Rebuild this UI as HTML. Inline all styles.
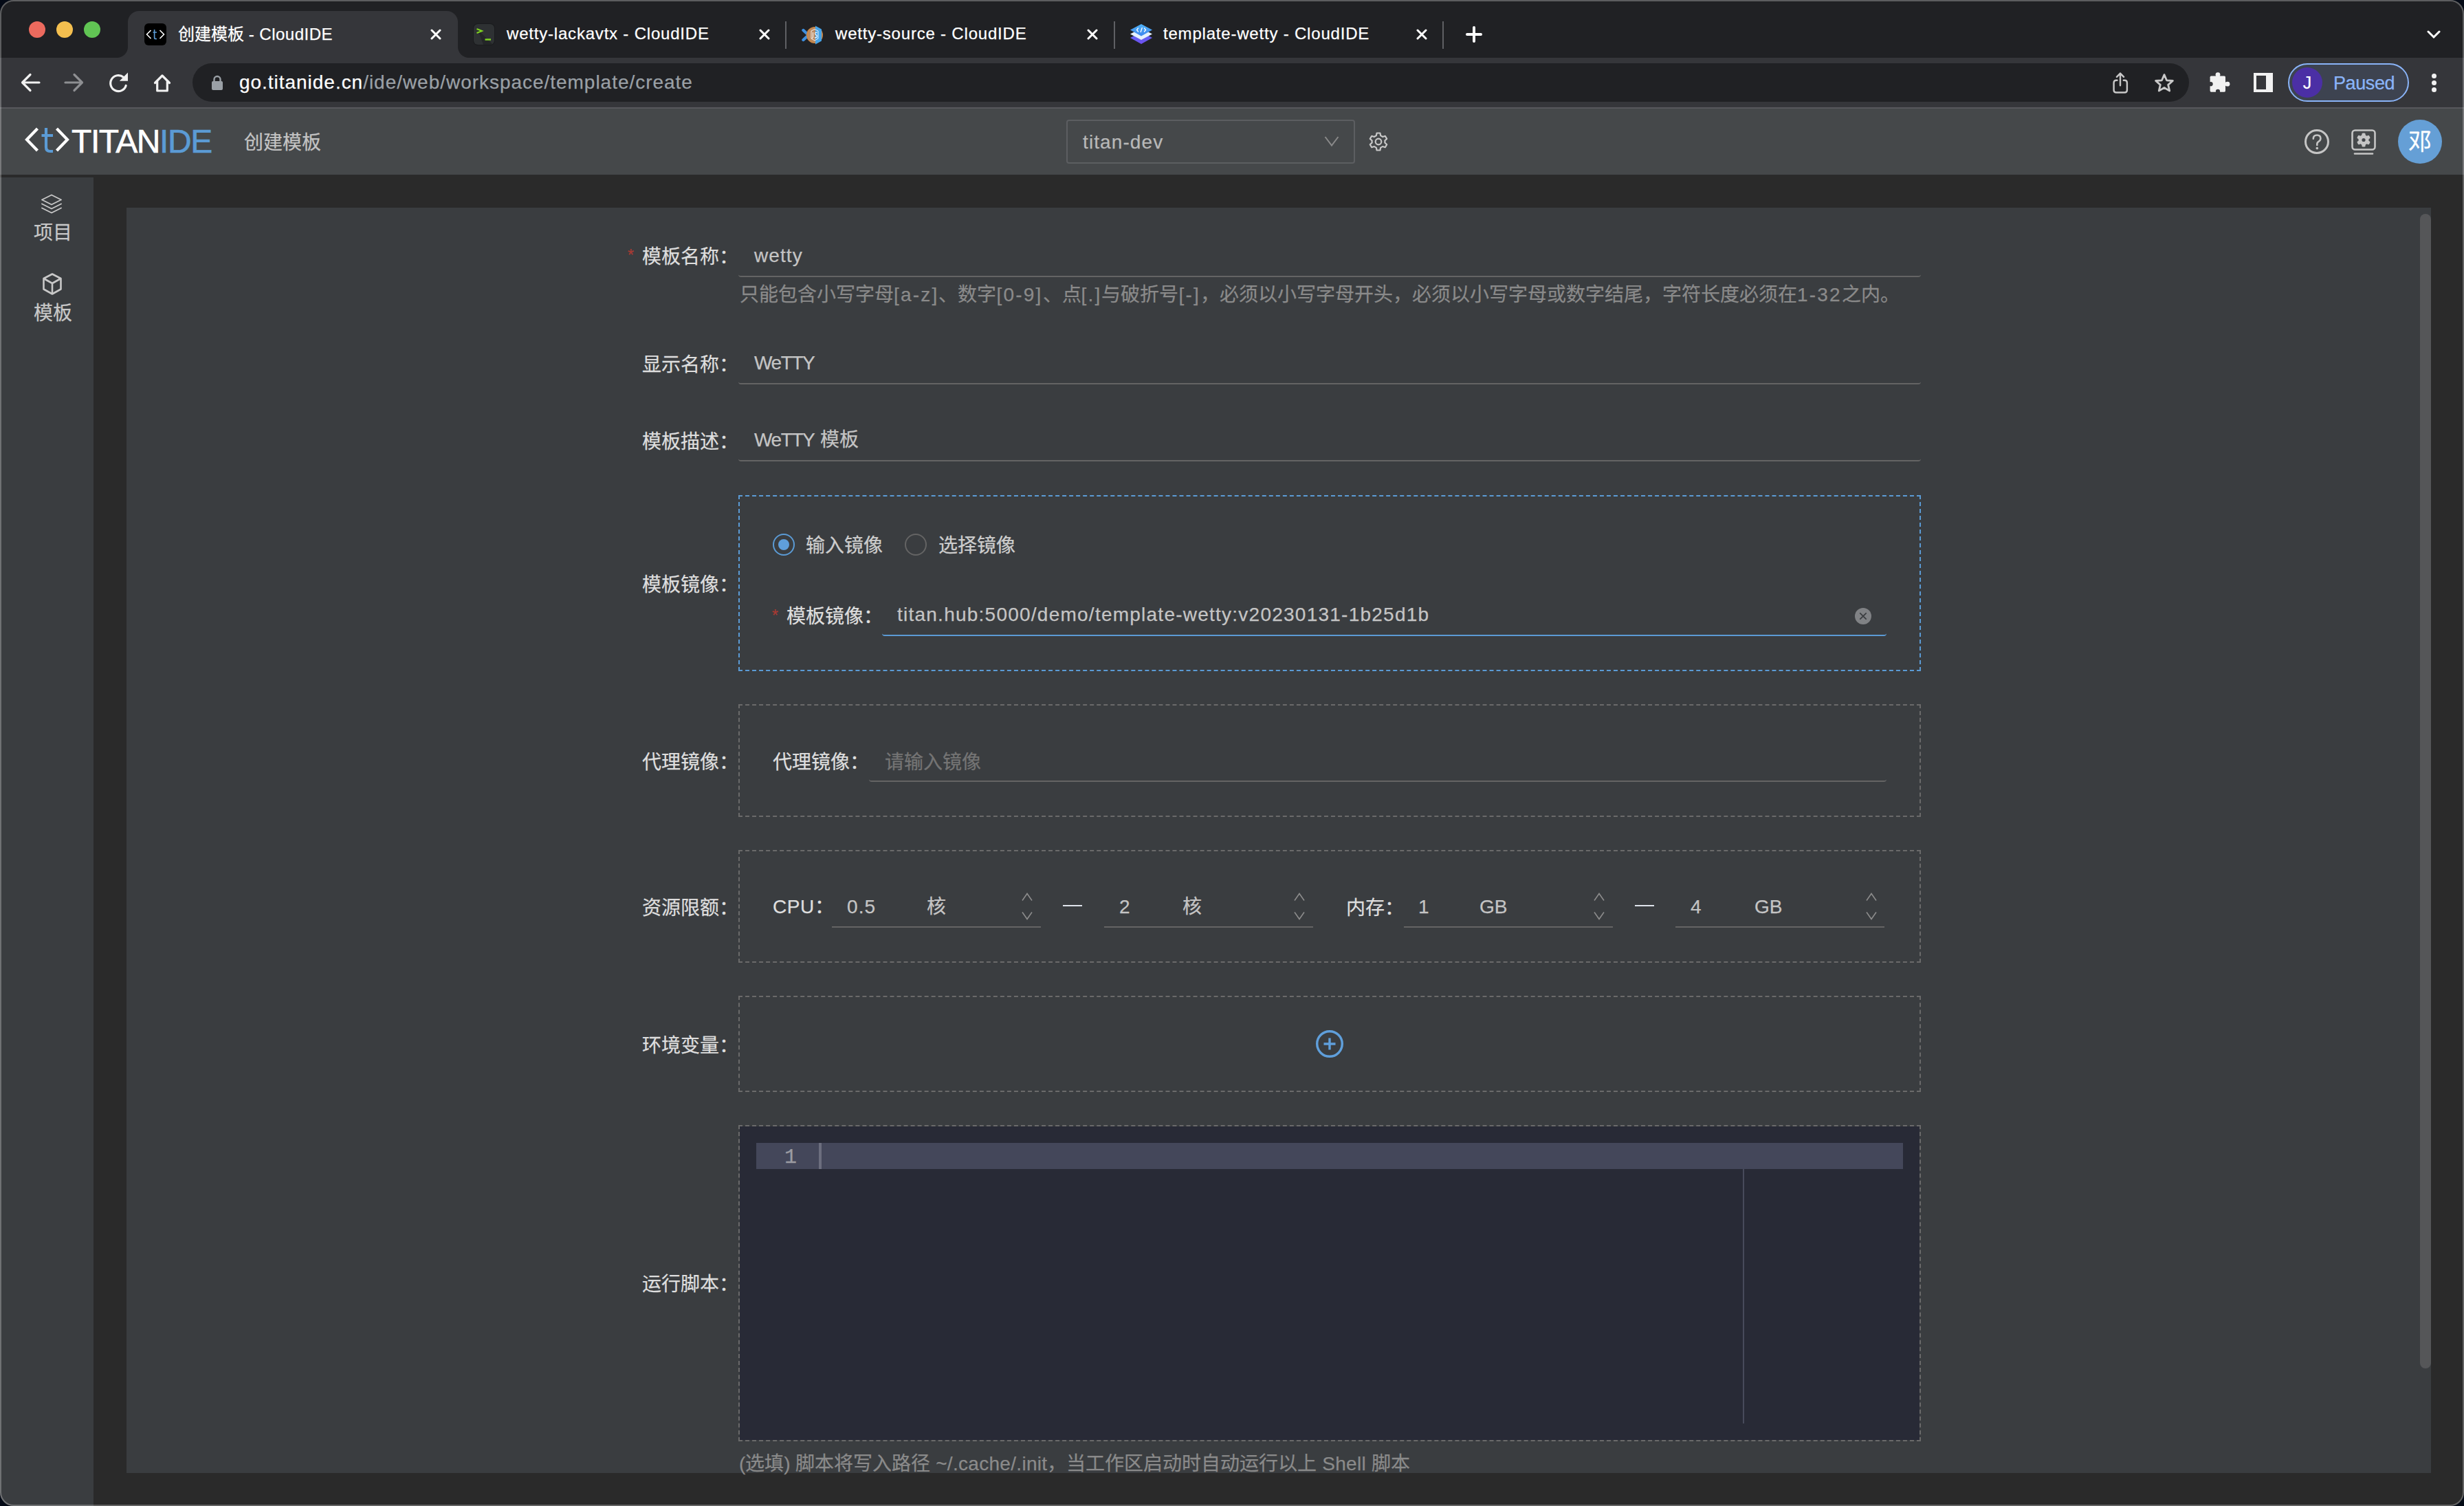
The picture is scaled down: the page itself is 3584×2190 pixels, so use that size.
<!DOCTYPE html>
<html lang="zh-CN"><head><meta charset="utf-8">
<style>
*{box-sizing:border-box;margin:0;padding:0}
html,body{width:3584px;height:2190px;overflow:hidden;background:#040a16;font-family:"Liberation Sans",sans-serif}
.win{position:absolute;left:0;top:0;width:3584px;height:2190px;border-radius:20px;overflow:hidden;background:#2a2a2a}
.winb{position:absolute;left:0;top:0;width:3584px;height:2190px;border-radius:20px;border:2px solid rgba(255,255,255,0.27);pointer-events:none;z-index:50}
.abs{position:absolute}
.t{position:absolute;white-space:pre;line-height:1;-webkit-text-stroke:0.25px currentColor}
/* chrome */
#tabstrip{left:0;top:0;width:3584px;height:84px;background:#202124}
#toolbar{left:0;top:84px;width:3584px;height:72px;background:#35363a}
#tbsep{left:0;top:156px;width:3584px;height:2px;background:#57585c}
.tab{position:absolute;top:16px;height:68px;width:480px}
#acttab{left:186px;top:16px;width:480px;height:68px;background:#35363a;border-radius:16px 16px 0 0}
.tabcorner{position:absolute;top:68px;width:16px;height:16px;background:#35363a}
.tabcorner::after{content:"";position:absolute;left:0;top:0;width:16px;height:16px;background:#202124}
#tcl::after{border-bottom-right-radius:16px}
#tcr::after{border-bottom-left-radius:16px}
.ttl{font-size:24px;color:#fff;letter-spacing:0.8px}
.tsep{position:absolute;top:31px;width:2px;height:40px;background:#5f6064}
#omni{left:280px;top:92px;width:2904px;height:56px;border-radius:28px;background:#202124}
.url{font-size:28px;letter-spacing:0.97px}
/* app */
#hdr{left:0;top:158px;width:3584px;height:96px;background:#45484a}
#side{left:0;top:258px;width:136px;height:1932px;background:#3a3d40}
#card{left:184px;top:302px;width:3352px;height:1840px;background:#3a3d40}
#sbar{left:3520px;top:311px;width:16px;height:1679px;border-radius:8px;background:#555658}
.lbl{font-size:28px;color:#dedede}
.val{font-size:28px;color:#c4c4c4;letter-spacing:1.1px}
.req{font-size:23px;color:#a83a33}
.uline{position:absolute;height:4px;border-bottom:2px solid #646464;border-radius:0 0 4px 4px}
.dbox{position:absolute;border:2px dashed #6a6a6a}
.help{font-size:28px;color:#8a8a8a}
.lt{letter-spacing:2.2px}
.lt2{letter-spacing:0.3px}
</style></head><body>
<div class="win">
  <!-- ===== TAB STRIP ===== -->
  <div id="tabstrip" class="abs"></div>
  <!-- traffic lights -->
  <div class="abs" style="left:42px;top:31px;width:24px;height:24px;border-radius:50%;background:#ec6a5e"></div>
  <div class="abs" style="left:82px;top:31px;width:24px;height:24px;border-radius:50%;background:#f4bf4f"></div>
  <div class="abs" style="left:122px;top:31px;width:24px;height:24px;border-radius:50%;background:#61c554"></div>
  <div id="acttab" class="abs"></div>
  <div id="tcl" class="tabcorner" style="left:170px"></div>
  <div id="tcr" class="tabcorner" style="left:666px"></div>
  
  <!-- tab 1 favicon -->
  <div class="abs" style="left:210px;top:34px;width:32px;height:32px;border-radius:6px;background:#000">
    <svg width="32" height="32" viewBox="0 0 32 32" style="position:absolute;left:0;top:0">
      <path d="M9.5 10 L3.5 16 L9.5 22" fill="none" stroke="#fff" stroke-width="1.6"/>
      <path d="M22.5 10 L28.5 16 L22.5 22" fill="none" stroke="#fff" stroke-width="1.6"/>
      <path d="M14.6 9 V20.5 Q14.6 22.5 16.6 22.5 H18 M12.5 13 H18" fill="none" stroke="#5b9bd5" stroke-width="1.7"/>
    </svg>
  </div>
  <div class="t ttl" style="left:259px;top:38px;letter-spacing:0">创建模板 <span style="letter-spacing:0.5px">- CloudIDE</span></div>
  <svg class="abs" style="left:626px;top:42px" width="16" height="16" viewBox="0 0 16 16"><path d="M2 2L14 14M14 2L2 14" stroke="#fff" stroke-width="3" stroke-linecap="round"/></svg>
  <!-- tab 2 -->
  <div class="abs" style="left:689px;top:35px;width:30px;height:30px;border-radius:6px;background:#2e3133;overflow:hidden;box-shadow:0 0 0 1px #1a1b1d">
    <svg width="30" height="30" viewBox="0 0 30 30" style="position:absolute;left:0;top:0">
      <path d="M6 8 L30 32 L30 30 L14 30 Z" fill="#232527"/>
      <path d="M4.5 7 L12 10 L4.5 13" fill="none" stroke="#7ed321" stroke-width="2"/>
      <path d="M16.5 22.5 H25" stroke="#7ed321" stroke-width="2.4"/>
    </svg>
  </div>
  <div class="t ttl" style="left:737px;top:37px">wetty-lackavtx - CloudIDE</div>
  <svg class="abs" style="left:1104px;top:42px" width="16" height="16" viewBox="0 0 16 16"><path d="M2 2L14 14M14 2L2 14" stroke="#fff" stroke-width="3" stroke-linecap="round"/></svg>
  <div class="tsep" style="left:1142px"></div>
  <!-- tab 3 -->
  <svg class="abs" style="left:1166px;top:36px" width="32" height="30" viewBox="0 0 32 30">
    <path d="M2.5 8 L10 15 L2.5 22" fill="none" stroke="#3d8fe0" stroke-width="4.4" stroke-linejoin="round" stroke-linecap="round"/>
    <circle cx="19" cy="15" r="12" fill="#c8874a"/>
    <circle cx="19" cy="15" r="10" fill="#b98b63"/>
    <path d="M20 1.5 L29 6.5 L29 23.5 L20 28.5 Z" fill="#47a4e8"/>
    <path d="M14 9 L19 6.5 L24 9 V20 L19 23 L14 20 Z" fill="none" stroke="#fff" stroke-width="1" opacity="0.85"/>
    <path d="M16.5 11 V18 Q16.5 19.5 15 19.5 M22.5 11.5 Q20 10.5 19.5 12.5 Q19.5 14.5 21.5 15 Q23 16 22 18 Q20.5 19.5 19 18.5" fill="none" stroke="#fff" stroke-width="1.1"/>
  </svg>
  <div class="t ttl" style="left:1215px;top:37px">wetty-source - CloudIDE</div>
  <svg class="abs" style="left:1581px;top:42px" width="16" height="16" viewBox="0 0 16 16"><path d="M2 2L14 14M14 2L2 14" stroke="#fff" stroke-width="3" stroke-linecap="round"/></svg>
  <div class="tsep" style="left:1620px"></div>
  <!-- tab 4 -->
  <svg class="abs" style="left:1643px;top:34px" width="34" height="31" viewBox="0 0 34 31">
    <defs>
      <linearGradient id="g4a" x1="0" y1="0" x2="0" y2="1"><stop offset="0" stop-color="#5b6cf5"/><stop offset="1" stop-color="#6f4ff0"/></linearGradient>
      <linearGradient id="g4b" x1="0" y1="0" x2="0" y2="1"><stop offset="0" stop-color="#4fb3f7"/><stop offset="1" stop-color="#3d86ee"/></linearGradient>
    </defs>
    <path d="M1 21 L17 12.5 L33 21 L17 30 Z" fill="url(#g4a)"/>
    <path d="M1 15.5 L17 7 L33 15.5 L17 24 Z" fill="#e4f1fd"/>
    <path d="M1 9.5 L17 1 L33 9.5 L17 18.5 Z" fill="url(#g4b)"/>
    <path d="M12.5 7 L10.5 9.5 L12.5 12 M21.5 7 L23.5 9.5 L21.5 12 M18.2 6.5 L16.2 12.5" fill="none" stroke="#fff" stroke-width="1.3" stroke-linecap="round"/>
  </svg>
  <div class="t ttl" style="left:1692px;top:37px">template-wetty - CloudIDE</div>
  <svg class="abs" style="left:2060px;top:42px" width="16" height="16" viewBox="0 0 16 16"><path d="M2 2L14 14M14 2L2 14" stroke="#fff" stroke-width="3" stroke-linecap="round"/></svg>
  <div class="tsep" style="left:2098px"></div>
  <svg class="abs" style="left:2132px;top:38px" width="24" height="24" viewBox="0 0 24 24"><path d="M12 2V22M2 12H22" stroke="#fff" stroke-width="4" stroke-linecap="round"/></svg>
  <svg class="abs" style="left:3530px;top:43px" width="20" height="14" viewBox="0 0 20 14"><path d="M2 3 L10 11 L18 3" fill="none" stroke="#fff" stroke-width="3" stroke-linecap="round"/></svg>

  <!-- ===== TOOLBAR ===== -->
  <div id="toolbar" class="abs"></div>
  <div id="tbsep" class="abs"></div>
  <div id="omni" class="abs"></div>
  
  <!-- back / fwd / reload / home -->
  <svg class="abs" style="left:28px;top:104px" width="32" height="32" viewBox="0 0 32 32"><path d="M29 16H5M16 4.5L4.5 16L16 27.5" fill="none" stroke="#f1f1f1" stroke-width="3.2" stroke-linecap="round" stroke-linejoin="round"/></svg>
  <svg class="abs" style="left:92px;top:104px" width="32" height="32" viewBox="0 0 32 32"><path d="M3 16H27M16 4.5L27.5 16L16 27.5" fill="none" stroke="#8e8f92" stroke-width="3.2" stroke-linecap="round" stroke-linejoin="round"/></svg>
  <svg class="abs" style="left:156px;top:104px" width="32" height="32" viewBox="0 0 32 32">
    <path d="M27.2 20.5 A11.5 11.5 0 1 1 23.5 8.2" fill="none" stroke="#f1f1f1" stroke-width="3.2" stroke-linecap="round"/>
    <path d="M17.8 13.8 L30 13.8 L30 1.5 Z" fill="#f1f1f1"/>
  </svg>
  <svg class="abs" style="left:220px;top:104px" width="32" height="32" viewBox="0 0 32 32"><path d="M5.5 16.5 L16 6 L26.5 16.5 M8.7 14 V28 H23.3 V14" fill="none" stroke="#f1f1f1" stroke-width="3.2" stroke-linejoin="round" stroke-linecap="round"/></svg>
  <!-- lock -->
  <svg class="abs" style="left:306px;top:108px" width="20" height="24" viewBox="0 0 20 24"><path d="M5.5 10 V7.5 A4.5 4.5 0 0 1 14.5 7.5 V10" fill="none" stroke="#9aa0a6" stroke-width="2.4"/><rect x="2" y="10" width="16" height="13" rx="2" fill="#9aa0a6"/></svg>
  <div class="t url" style="left:348px;top:106px;color:#fff">go.titanide.cn<span style="color:#9aa0a6">/ide/web/workspace/template/create</span></div>
  <!-- share / star -->
  <svg class="abs" style="left:3070px;top:104px" width="28" height="34" viewBox="0 0 28 34"><path d="M14 3 V20.3 M8.9 7.8 L14 2.6 L19.1 7.8 M9.5 12.8 H8.2 Q4.6 12.8 4.6 16.4 V26.9 Q4.6 30.5 8.2 30.5 H20.3 Q23.9 30.5 23.9 26.9 V16.4 Q23.9 12.8 20.3 12.8 H18.8" fill="none" stroke="#c8c8c8" stroke-width="2.4" stroke-linecap="round" stroke-linejoin="round"/></svg>
  <svg class="abs" style="left:3131px;top:104px" width="34" height="32" viewBox="0 0 34 32"><g transform="translate(17 16.3) scale(0.9) translate(-17 -16)"><path d="M17 3 L20.9 12.1 L30.8 12.9 L23.3 19.4 L25.6 29.1 L17 24 L8.4 29.1 L10.7 19.4 L3.2 12.9 L13.1 12.1 Z" fill="none" stroke="#c8c8c8" stroke-width="3.1" stroke-linejoin="round"/></g></svg>
  <!-- puzzle -->
  <svg class="abs" style="left:3212px;top:103px" width="34" height="32" viewBox="0 0 34 32">
    <rect x="2.6" y="7.6" width="22.4" height="23.1" rx="1.6" fill="#f1f1f1"/>
    <circle cx="14" cy="5.6" r="3.4" fill="#f1f1f1"/><rect x="11.6" y="5.6" width="4.8" height="3" fill="#f1f1f1"/>
    <circle cx="28" cy="19.2" r="3.4" fill="#f1f1f1"/><rect x="24" y="16.8" width="4" height="4.8" fill="#f1f1f1"/>
    <circle cx="3.6" cy="19.2" r="3.1" fill="#35363a"/>
    <circle cx="14" cy="29.8" r="3.1" fill="#35363a"/>
  </svg>
  <!-- side panel -->
  <div class="abs" style="left:3278px;top:106px;width:28px;height:28px;background:#f1f1f1"></div>
  <div class="abs" style="left:3282px;top:110px;width:14px;height:20px;background:#35363a"></div>
  <!-- profile pill -->
  <div class="abs" style="left:3328px;top:92px;width:176px;height:56px;border-radius:28px;border:2px solid #8ab4f8;background:#3d4350"></div>
  <div class="abs" style="left:3334px;top:98px;width:44px;height:44px;border-radius:50%;background:#4b2fa5"></div>
  <div class="t" style="left:3346px;top:108px;font-size:25px;color:#fff;width:20px;text-align:center">J</div>
  <div class="t" style="left:3394px;top:108px;font-size:27px;color:#8ab4f8;letter-spacing:-0.4px">Paused</div>
  <!-- kebab -->
  <div class="abs" style="left:3537px;top:107px;width:7px;height:7px;border-radius:50%;background:#f1f1f1"></div>
  <div class="abs" style="left:3537px;top:117px;width:7px;height:7px;border-radius:50%;background:#f1f1f1"></div>
  <div class="abs" style="left:3537px;top:127px;width:7px;height:7px;border-radius:50%;background:#f1f1f1"></div>

  <!-- ===== APP HEADER ===== -->
  <div id="hdr" class="abs"></div>
  
  <!-- logo -->
  <svg class="abs" style="left:34px;top:184px" width="72" height="42" viewBox="0 0 72 42">
    <path d="M20.5 3 L5 19 L20.5 35" fill="none" stroke="#fff" stroke-width="4.2"/>
    <path d="M48.5 3 L64 19 L48.5 35" fill="none" stroke="#fff" stroke-width="4.2"/>
    <path d="M33 2 V30 Q33 36 39 36 H43 M26.5 13 H43" fill="none" stroke="#5b9bd5" stroke-width="4.2"/>
  </svg>
  <div class="t" style="left:104px;top:182px;font-size:48px;color:#fff;letter-spacing:-1.4px;-webkit-text-stroke:0.6px #fff">TITAN<span style="color:#5b9bd5;-webkit-text-stroke:0.6px #5b9bd5">IDE</span></div>
  <div class="t" style="left:355px;top:194px;font-size:28px;color:#c3c3c3">创建模板</div>
  <!-- select -->
  <div class="abs" style="left:1551px;top:174px;width:420px;height:64px;border:2px solid #5c5e61;border-radius:4px"></div>
  <div class="t" style="left:1575px;top:193px;font-size:28px;color:#b8b8b8;letter-spacing:1.1px">titan-dev</div>
  <svg class="abs" style="left:1926px;top:197px" width="22" height="17" viewBox="0 0 22 17"><path d="M1.5 2 L11 14.5 L20.5 2" fill="none" stroke="#8a8a8a" stroke-width="2"/></svg>
  <!-- gear -->
  <svg class="abs" style="left:1990px;top:191px" width="30" height="30" viewBox="0 0 30 30">
    <path d="M12.6 2.5 H17.4 L18.2 6.3 Q19.8 6.9 21.1 8 L24.8 6.8 L27.2 10.9 L24.3 13.5 Q24.6 15 24.3 16.5 L27.2 19.1 L24.8 23.2 L21.1 22 Q19.8 23.1 18.2 23.7 L17.4 27.5 H12.6 L11.8 23.7 Q10.2 23.1 8.9 22 L5.2 23.2 L2.8 19.1 L5.7 16.5 Q5.4 15 5.7 13.5 L2.8 10.9 L5.2 6.8 L8.9 8 Q10.2 6.9 11.8 6.3 Z" fill="none" stroke="#c8c8c8" stroke-width="2.2" stroke-linejoin="round"/>
    <circle cx="15" cy="15" r="4.3" fill="none" stroke="#c8c8c8" stroke-width="2.2"/>
  </svg>
  <!-- help -->
  <svg class="abs" style="left:3350px;top:186px" width="40" height="40" viewBox="0 0 40 40">
    <circle cx="20" cy="20" r="16.5" fill="none" stroke="#c5c5c5" stroke-width="3"/>
    <path d="M14.8 15.8 Q14.8 10.5 20.2 10.5 Q25.4 10.5 25.4 15.3 Q25.4 18.3 22.5 19.8 Q20.3 21 20.3 23.5 V25" fill="none" stroke="#c5c5c5" stroke-width="2.6" stroke-linecap="round"/>
    <circle cx="20.3" cy="29.6" r="1.8" fill="#c5c5c5"/>
  </svg>
  <!-- monitor gear -->
  <svg class="abs" style="left:3418px;top:186px" width="40" height="40" viewBox="0 0 40 40">
    <rect x="3.5" y="3.5" width="33" height="28" rx="4" fill="none" stroke="#c5c5c5" stroke-width="2.6"/>
    <path d="M7 37.5 H33" stroke="#c5c5c5" stroke-width="2.6" stroke-linecap="round"/>
    <g transform="translate(20 17.5)" fill="#c5c5c5">
      <circle r="7.5"/>
      <rect x="-2.6" y="-10" width="5.2" height="20" rx="1.5"/>
      <rect x="-2.6" y="-10" width="5.2" height="20" rx="1.5" transform="rotate(60)"/>
      <rect x="-2.6" y="-10" width="5.2" height="20" rx="1.5" transform="rotate(120)"/>
    </g>
    <circle cx="20" cy="17.5" r="2.6" fill="#43464a"/>
  </svg>
  <!-- avatar -->
  <div class="abs" style="left:3488px;top:174px;width:64px;height:64px;border-radius:50%;background:#659fd6"></div>
  <div class="t" style="left:3488px;top:189px;width:64px;text-align:center;font-size:34px;color:#fff">邓</div>

  <div id="side" class="abs"></div>
  
  <svg class="abs" style="left:58px;top:281px" width="34" height="32" viewBox="0 0 34 32">
    <path d="M17 2.5 L31 9.5 L17 16.5 L3 9.5 Z" fill="none" stroke="#c8c8c8" stroke-width="1.9" stroke-linejoin="round"/>
    <path d="M3 15.5 L17 22.5 L31 15.5" fill="none" stroke="#c8c8c8" stroke-width="1.9" stroke-linejoin="round" stroke-linecap="round"/>
    <path d="M3 21.5 L17 28.5 L31 21.5" fill="none" stroke="#c8c8c8" stroke-width="1.9" stroke-linejoin="round" stroke-linecap="round"/>
  </svg>
  <div class="t" style="left:49px;top:325px;font-size:28px;color:#c8c8c8">项目</div>
  <svg class="abs" style="left:60px;top:396px" width="32" height="34" viewBox="0 0 32 34">
    <path d="M16 2.5 L28.5 9 V24.5 L16 31.5 L3.5 24.5 V9 Z" fill="none" stroke="#c8c8c8" stroke-width="2.6" stroke-linejoin="round"/>
    <path d="M3.5 9 L16 16 L28.5 9 M16 16 V31.5" fill="none" stroke="#c8c8c8" stroke-width="2.6" stroke-linejoin="round"/>
  </svg>
  <div class="t" style="left:49px;top:442px;font-size:28px;color:#c8c8c8">模板</div>

  <div id="card" class="abs"></div>
  <div id="sbar" class="abs"></div>
  
<!--FORM-->
  <div class="t req" style="left:913px;top:360px">*</div>
  <div class="t lbl" style="left:934px;top:360px;">模板名称：</div>
  <div class="t val" style="left:1097px;top:358px;">wetty</div>
  <div class="uline" style="left:1074px;top:399px;width:1720px;"></div>
  <div class="t help" style="left:1076px;top:415px">只能包含小写字母<span class="lt">[a-z]</span>、数字<span class="lt">[0-9]</span>、点<span class="lt">[.]</span>与破折号<span class="lt">[-]</span>，必须以小写字母开头，必须以小写字母或数字结尾，字符长度必须在<span class="lt">1-32</span>之内。</div>
  <div class="t lbl" style="left:934px;top:517px;">显示名称：</div>
  <div class="t val" style="left:1097px;top:514px;letter-spacing:-1.4px">WeTTY</div>
  <div class="uline" style="left:1074px;top:555px;width:1720px;"></div>
  <div class="t lbl" style="left:934px;top:629px;">模板描述：</div>
  <div class="t val" style="left:1097px;top:626px;"><span style="letter-spacing:-1.4px">WeTTY</span> <span style="letter-spacing:0">模板</span></div>
  <div class="uline" style="left:1074px;top:667px;width:1720px;"></div>
  <div class="dbox" style="left:1074px;top:720px;width:1720px;height:256px;border-color:#5b9bd5"></div>
  <div class="t lbl" style="left:934px;top:837px;">模板镜像：</div>
  <div class="abs" style="left:1124px;top:776px;width:32px;height:32px;border-radius:50%;border:2px solid #5b9bd5"></div>
  <div class="abs" style="left:1132px;top:784px;width:16px;height:16px;border-radius:50%;background:#5f9fdb"></div>
  <div class="t lbl" style="left:1172px;top:780px;color:#cdcdcd">输入镜像</div>
  <div class="abs" style="left:1316px;top:776px;width:32px;height:32px;border-radius:50%;border:2px solid #646464"></div>
  <div class="t lbl" style="left:1365px;top:780px;color:#cdcdcd">选择镜像</div>
  <div class="t req" style="left:1123px;top:884px">*</div>
  <div class="t lbl" style="left:1144px;top:883px;">模板镜像：</div>
  <div class="t val" style="left:1305px;top:880px;letter-spacing:1.24px">titan.hub:5000/demo/template-wetty:v20230131-1b25d1b</div>
  <div class="uline" style="left:1283px;top:921px;width:1461px;border-color:#5b9bd5;"></div>
  <svg class="abs" style="left:2698px;top:884px" width="24" height="24" viewBox="0 0 24 24"><circle cx="12" cy="12" r="12" fill="#808285"/><path d="M7.3 7.3 L16.7 16.7 M16.7 7.3 L7.3 16.7" stroke="#3a3d40" stroke-width="1.7"/></svg>
  <div class="dbox" style="left:1074px;top:1024px;width:1720px;height:164px"></div>
  <div class="t lbl" style="left:934px;top:1095px;">代理镜像：</div>
  <div class="t lbl" style="left:1124px;top:1095px;">代理镜像：</div>
  <div class="t lbl" style="left:1287px;top:1095px;color:#747474">请输入镜像</div>
  <div class="uline" style="left:1264px;top:1133px;width:1480px;"></div>
  <div class="dbox" style="left:1074px;top:1236px;width:1720px;height:164px"></div>
  <div class="t lbl" style="left:934px;top:1307px;">资源限额：</div>
  <div class="t val" style="left:1124px;top:1305px;color:#dedede;letter-spacing:0.6px">CPU<span style="letter-spacing:0">：</span></div>
  <div class="t val" style="left:1232px;top:1305px;">0.5</div>
  <div class="t lbl" style="left:1348px;top:1305px;color:#c4c4c4">核</div>
  <svg class="abs" style="left:1485px;top:1297px" width="18" height="42" viewBox="0 0 18 42"><path d="M2 12.5 L9 2.5 L16 12.5 M2 29.5 L9 39.5 L16 29.5" fill="none" stroke="#8c8c8c" stroke-width="1.6"/></svg>
  <div class="uline" style="left:1210px;top:1345px;width:304px;border-radius:0;"></div>
  <div class="abs" style="left:1546px;top:1316px;width:28px;height:2px;background:#dfe4ec"></div>
  <div class="t val" style="left:1628px;top:1305px;">2</div>
  <div class="t lbl" style="left:1720px;top:1305px;color:#c4c4c4">核</div>
  <svg class="abs" style="left:1881px;top:1297px" width="18" height="42" viewBox="0 0 18 42"><path d="M2 12.5 L9 2.5 L16 12.5 M2 29.5 L9 39.5 L16 29.5" fill="none" stroke="#8c8c8c" stroke-width="1.6"/></svg>
  <div class="uline" style="left:1606px;top:1345px;width:304px;border-radius:0;"></div>
  <div class="t lbl" style="left:1958px;top:1307px;">内存：</div>
  <div class="t val" style="left:2063px;top:1305px;">1</div>
  <div class="t val" style="left:2152px;top:1305px;letter-spacing:0">GB</div>
  <svg class="abs" style="left:2317px;top:1297px" width="18" height="42" viewBox="0 0 18 42"><path d="M2 12.5 L9 2.5 L16 12.5 M2 29.5 L9 39.5 L16 29.5" fill="none" stroke="#8c8c8c" stroke-width="1.6"/></svg>
  <div class="uline" style="left:2042px;top:1345px;width:304px;border-radius:0;"></div>
  <div class="abs" style="left:2378px;top:1316px;width:28px;height:2px;background:#dfe4ec"></div>
  <div class="t val" style="left:2459px;top:1305px;">4</div>
  <div class="t val" style="left:2552px;top:1305px;letter-spacing:0">GB</div>
  <svg class="abs" style="left:2713px;top:1297px" width="18" height="42" viewBox="0 0 18 42"><path d="M2 12.5 L9 2.5 L16 12.5 M2 29.5 L9 39.5 L16 29.5" fill="none" stroke="#8c8c8c" stroke-width="1.6"/></svg>
  <div class="uline" style="left:2437px;top:1345px;width:304px;border-radius:0;"></div>
  <div class="dbox" style="left:1074px;top:1448px;width:1720px;height:140px"></div>
  <div class="t lbl" style="left:934px;top:1507px;">环境变量：</div>
  <svg class="abs" style="left:1912px;top:1496px" width="44" height="44" viewBox="0 0 44 44"><circle cx="22" cy="22" r="18.3" fill="none" stroke="#5f9fdb" stroke-width="3.4"/><path d="M22 13.5 V30.5 M13.5 22 H30.5" stroke="#5f9fdb" stroke-width="3.4"/></svg>
  <div class="dbox" style="left:1074px;top:1636px;width:1720px;height:460px;background:#282a36;background-clip:padding-box"></div>
  <div class="t lbl" style="left:934px;top:1854px;">运行脚本：</div>
  <div class="abs" style="left:1100px;top:1662px;width:1668px;height:38px;background:#44475a"></div>
  <div class="t" style="left:1141px;top:1668px;font-family:'Liberation Mono',monospace;font-size:30px;color:#9c9ca2">1</div>
  <div class="abs" style="left:1191px;top:1662px;width:4px;height:38px;background:#6c6e7e"></div>
  <div class="abs" style="left:2535px;top:1700px;width:2px;height:370px;background:#474a5b"></div>
  <div class="t help" style="left:1075px;top:2115px">(选填) 脚本将写入路径 <span class="lt2">~/.cache/.init</span>，当工作区启动时自动运行以上 <span class="lt2">Shell</span> 脚本</div>
<!--/FORM-->
</div>
<div class="winb"></div>
</body></html>
